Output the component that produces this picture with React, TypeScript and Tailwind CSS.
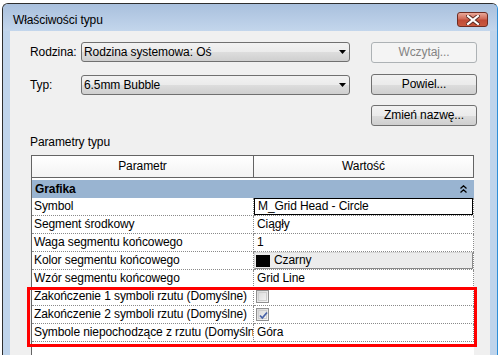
import React from "react";

const btn =
  "h-[21px] w-[106px] rounded-[3px] border border-[#707070] bg-[linear-gradient(#f2f2f2,#ebebeb_50%,#dddddd_51%,#cfcfcf)] flex items-center justify-center text-black";

function Combo({ text }: { text: string }) {
  return (
    <div className="h-[20px] w-[269px] rounded-[3px] border border-[#707070] bg-[linear-gradient(#f2f2f2,#ebebeb_50%,#dddddd_51%,#cfcfcf)] flex items-center justify-between pl-[2px] pr-[3px]">
      <span>{text}</span>
      <svg width="7" height="4" viewBox="0 0 7 4">
        <path d="M0 0H7L3.5 4Z" fill="#000" />
      </svg>
    </div>
  );
}

function Check({ checked }: { checked?: boolean }) {
  return (
    <div className="ml-[2px] h-[13px] w-[13px] border border-[#8f8f8f] bg-[linear-gradient(135deg,#d8d8d8,#f7f7f7)] p-[1px]">
      <div className="h-full w-full border border-[#cfcfcf] relative">
        {checked && (
          <svg className="absolute left-[0px] top-[0px]" width="9" height="9" viewBox="0 0 9 9">
            <path d="M1 4.5L3.3 7L8 1.5" stroke="#4a64a8" strokeWidth="1.8" fill="none" />
          </svg>
        )}
      </div>
    </div>
  );
}

export default function App() {
  // wiersze parametrów
  const rows: { name: string; value: React.ReactNode }[] = [
    {
      name: "Symbol",
      value: (
        <div className="h-full w-full border border-black bg-white pl-[3px] flex items-center">M_Grid Head - Circle</div>
      ),
    },
    { name: "Segment środkowy", value: <span className="pl-[3px]">Ciągły</span> },
    { name: "Waga segmentu końcowego", value: <span className="pl-[3px]">1</span> },
    {
      name: "Kolor segmentu końcowego",
      value: (
        <div className="h-[17px] w-full border border-[#d8d8d8] border-r-[#8a8a8a] border-b-[#8a8a8a] bg-[#ececec] flex items-center gap-[4px] pl-[1px]">
          <div className="h-[12px] w-[14px] bg-black" />
          <span>Czarny</span>
        </div>
      ),
    },
    { name: "Wzór segmentu końcowego", value: <span className="pl-[3px]">Grid Line</span> },
    { name: "Zakończenie 1 symboli rzutu (Domyślne)", value: <Check /> },
    { name: "Zakończenie 2 symboli rzutu (Domyślne)", value: <Check checked /> },
    { name: "Symbole niepochodzące z rzutu (Domyślne)", value: <span className="pl-[3px]">Góra</span> },
  ];

  return (
    <div className="w-[500px] h-[355px] overflow-hidden bg-white pt-[3px] pl-[2px] font-['Liberation_Sans',Arial,sans-serif] text-[12px] tracking-[-0.1px] text-black leading-[15px]">
      <div className="w-[496px] h-[400px] rounded-t-[6px] border border-b-0 border-[#2e2e2e] border-r-[#2f8fd8] bg-[#bfd4eb] flex flex-col">
        {/* --- TITLE BAR --- */}
        <div className="h-[27px] rounded-t-[5px] bg-[linear-gradient(#a9c0dd,#c3d6ec)] flex justify-between items-start pl-[10px] pr-[9px]">
          <span className="pt-[9px]">Właściwości typu</span>
          <div className="mt-[8px] h-[15px] w-[31px] rounded-[3px] border border-[#6e2c22] bg-[linear-gradient(#e9a99a,#d06a58_45%,#c04a35_55%,#c9593f)] flex items-center justify-center">
            <svg width="14" height="10" viewBox="0 0 14 10">
              <path d="M2 1L12 9M12 1L2 9" stroke="#5a2a22" strokeWidth="4" strokeLinecap="square" />
              <path d="M2 1L12 9M12 1L2 9" stroke="#fff" strokeWidth="2.2" strokeLinecap="square" />
            </svg>
          </div>
        </div>

        {/* --- CLIENT --- */}
        <div className="relative ml-[7px] w-[480px] flex-1 bg-[#f0f0f0] pl-[20px] pt-[11px]">
          <div className="flex items-start">
            <span className="w-[51px] h-[20px] flex items-center">Rodzina:</span>
            <Combo text="Rodzina systemowa: Oś" />
            <div className="ml-[21px] h-[21px] w-[106px] rounded-[3px] border border-[#adb2b5] bg-[#f4f4f4] flex items-center justify-center text-[#838383]">
              Wczytaj...
            </div>
          </div>
          <div className="flex items-start mt-[11px]">
            <span className="w-[51px] h-[20px] mt-[1px] flex items-center">Typ:</span>
            <div className="mt-[1px]">
              <Combo text="6.5mm Bubble" />
            </div>
            <div className={"ml-[21px] " + btn}>Powiel...</div>
          </div>
          <div className="flex mt-[10px] pl-[341px]">
            <div className={btn}>Zmień nazwę...</div>
          </div>

          <div className="mt-[9px] h-[15px]">Parametry typu</div>

          {/* --- TABELA --- */}
          <div className="mt-[5px] ml-[1px] w-[443px] h-[220px] border-l border-[#646464] bg-white">
            <div className="flex h-[23px] border-t border-b border-[#646464] bg-[linear-gradient(#ffffff,#f3f3f3)]">
              <div className="w-[222px] border-r border-[#646464] flex items-center justify-center">Parametr</div>
              <div className="w-[220px] border-r border-[#646464] flex items-center justify-center">Wartość</div>
            </div>
            <div className="mt-[2px] h-[18px] w-[442px] bg-[#99b4d1] flex items-center justify-between pl-[3px] pr-[7px] font-bold">
              <span>Grafika</span>
              <svg width="7" height="8" viewBox="0 0 7 8">
                <path d="M0.5 3.5L3.5 0.8L6.5 3.5M0.5 7.5L3.5 4.8L6.5 7.5" stroke="#000" strokeWidth="1.3" fill="none" />
              </svg>
            </div>
            {rows.map((r) => (
              <div key={r.name} className="flex h-[18px]">
                <div className="w-[222px] border-b border-r border-dotted border-[#8a8a8a] pl-[2px] flex items-center whitespace-nowrap overflow-hidden">
                  {r.name}
                </div>
                <div className="w-[220px] border-b border-r border-dotted border-[#8a8a8a] flex items-center">{r.value}</div>
              </div>
            ))}
          </div>

          {/* czerwona ramka */}
          <div className="absolute left-[17px] top-[256px] w-[450px] h-[60px] border-[3px] border-[#ff0000]" />
        </div>
      </div>
    </div>
  );
}
